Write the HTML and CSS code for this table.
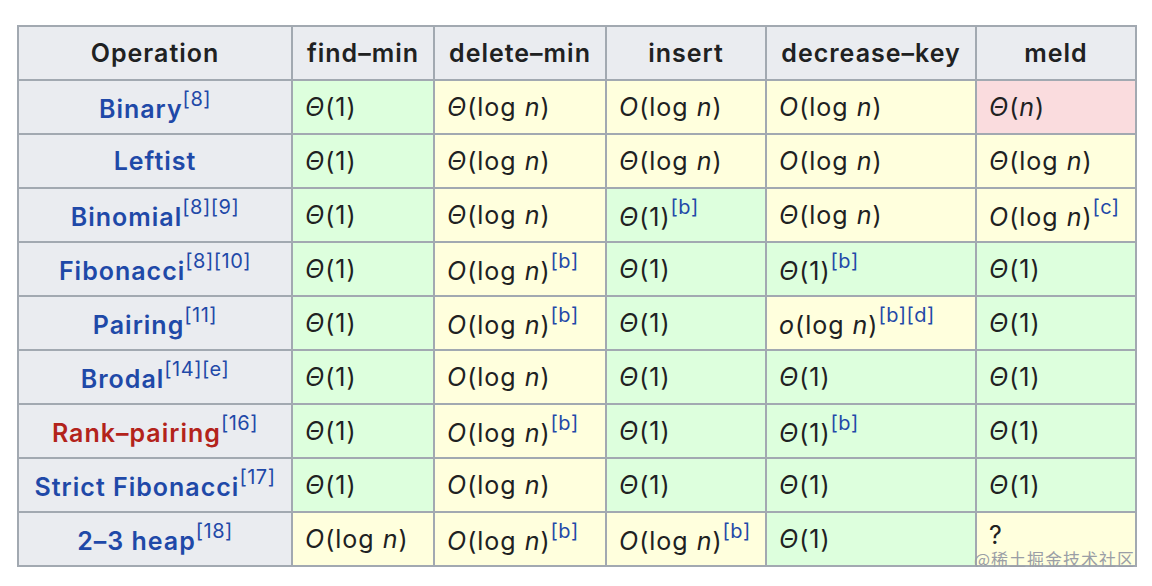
FILE: index.html
```html
<!DOCTYPE html>
<html>
<head>
<meta charset="utf-8">
<link rel="stylesheet" href="styles.css">
</head>
<body>
<div class="wrap">
<table class="wikitable">
  <colgroup>
    <col class="c1"><col class="c2"><col class="c3"><col class="c4"><col class="c5"><col class="c6">
  </colgroup>
  <thead>
    <tr>
      <th>Operation</th><th>find–min</th><th>delete–min</th><th>insert</th><th>decrease–key</th><th>meld</th>
    </tr>
  </thead>
  <tbody>
    <tr>
      <th><a class="lk">Binary</a><sup>[8]</sup></th>
      <td class="g"><i>Θ</i>(1)</td>
      <td class="y"><i>Θ</i>(log&nbsp;<i>n</i>)</td>
      <td class="y"><i>O</i>(log&nbsp;<i>n</i>)</td>
      <td class="y"><i>O</i>(log&nbsp;<i>n</i>)</td>
      <td class="r"><i>Θ</i>(<i>n</i>)</td>
    </tr>
    <tr>
      <th><a class="lk">Leftist</a></th>
      <td class="g"><i>Θ</i>(1)</td>
      <td class="y"><i>Θ</i>(log&nbsp;<i>n</i>)</td>
      <td class="y"><i>Θ</i>(log&nbsp;<i>n</i>)</td>
      <td class="y"><i>O</i>(log&nbsp;<i>n</i>)</td>
      <td class="y"><i>Θ</i>(log&nbsp;<i>n</i>)</td>
    </tr>
    <tr>
      <th><a class="lk">Binomial</a><sup>[8]</sup><sup>[9]</sup></th>
      <td class="g"><i>Θ</i>(1)</td>
      <td class="y"><i>Θ</i>(log&nbsp;<i>n</i>)</td>
      <td class="g"><i>Θ</i>(1)<sup>[b]</sup></td>
      <td class="y"><i>Θ</i>(log&nbsp;<i>n</i>)</td>
      <td class="y"><i>O</i>(log&nbsp;<i>n</i>)<sup>[c]</sup></td>
    </tr>
    <tr>
      <th><a class="lk">Fibonacci</a><sup>[8]</sup><sup>[10]</sup></th>
      <td class="g"><i>Θ</i>(1)</td>
      <td class="y"><i>O</i>(log&nbsp;<i>n</i>)<sup>[b]</sup></td>
      <td class="g"><i>Θ</i>(1)</td>
      <td class="g"><i>Θ</i>(1)<sup>[b]</sup></td>
      <td class="g"><i>Θ</i>(1)</td>
    </tr>
    <tr>
      <th><a class="lk">Pairing</a><sup>[11]</sup></th>
      <td class="g"><i>Θ</i>(1)</td>
      <td class="y"><i>O</i>(log&nbsp;<i>n</i>)<sup>[b]</sup></td>
      <td class="g"><i>Θ</i>(1)</td>
      <td class="y"><i>o</i>(log&nbsp;<i>n</i>)<sup>[b]</sup><sup>[d]</sup></td>
      <td class="g"><i>Θ</i>(1)</td>
    </tr>
    <tr>
      <th><a class="lk">Brodal</a><sup>[14]</sup><sup>[e]</sup></th>
      <td class="g"><i>Θ</i>(1)</td>
      <td class="y"><i>O</i>(log&nbsp;<i>n</i>)</td>
      <td class="g"><i>Θ</i>(1)</td>
      <td class="g"><i>Θ</i>(1)</td>
      <td class="g"><i>Θ</i>(1)</td>
    </tr>
    <tr>
      <th><a class="lk new">Rank–pairing</a><sup>[16]</sup></th>
      <td class="g"><i>Θ</i>(1)</td>
      <td class="y"><i>O</i>(log&nbsp;<i>n</i>)<sup>[b]</sup></td>
      <td class="g"><i>Θ</i>(1)</td>
      <td class="g"><i>Θ</i>(1)<sup>[b]</sup></td>
      <td class="g"><i>Θ</i>(1)</td>
    </tr>
    <tr>
      <th><a class="lk">Strict Fibonacci</a><sup>[17]</sup></th>
      <td class="g"><i>Θ</i>(1)</td>
      <td class="y"><i>O</i>(log&nbsp;<i>n</i>)</td>
      <td class="g"><i>Θ</i>(1)</td>
      <td class="g"><i>Θ</i>(1)</td>
      <td class="g"><i>Θ</i>(1)</td>
    </tr>
    <tr>
      <th><a class="lk">2–3 heap</a><sup>[18]</sup></th>
      <td class="y"><i>O</i>(log&nbsp;<i>n</i>)</td>
      <td class="y"><i>O</i>(log&nbsp;<i>n</i>)<sup>[b]</sup></td>
      <td class="y"><i>O</i>(log&nbsp;<i>n</i>)<sup>[b]</sup></td>
      <td class="g"><i>Θ</i>(1)</td>
      <td class="y q"><span class="qm">?</span></td>
    </tr>
  </tbody>
</table>
<div class="watermark">@稀土掘金技术社区</div>
</div>
</body>
</html>
```

FILE: styles.css
```css
html, body {
  margin: 0;
  padding: 0;
  background: #ffffff;
}
body {
  font-family: Inter, "Liberation Sans", Arial, "Noto Sans CJK SC", sans-serif;
  color: #202122;
}
.wrap {
  position: relative;
  padding: 25px 0 0 17px;
  width: 1120px;
}
.wikitable {
  border-collapse: collapse;
  table-layout: fixed;
  width: 1120px;
  font-size: 25px;
  letter-spacing: 1px;
}
.c1 { width: 274px; }
.c2 { width: 142px; }
.c3 { width: 172px; }
.c4 { width: 160px; }
.c5 { width: 210px; }
.c6 { width: 160px; }
.wikitable th,
.wikitable td {
  border: 2px solid #a2a9b1;
  height: 52px;
  padding: 0 12px;
  white-space: nowrap;
  line-height: 1.2;
}
.wikitable th {
  background: #eaecf0;
  font-weight: 600;
  text-align: center;
}
.wikitable td {
  text-align: left;
}
.g { background: #ddffdd; }
.y { background: #ffffdd; }
.r { background: #fadcde; }
.lk {
  color: #1f49a8;
}
.lk.new {
  color: #b3231b;
}
sup {
  font-size: 0.8em;
  font-weight: normal;
  color: #1f49a8;
  line-height: 1;
  letter-spacing: 0.5px;
  vertical-align: 0.62em;
}
.qm {
  display: inline-block;
  line-height: 22px;
  transform: translateY(-4px);
}
.watermark {
  position: absolute;
  right: 2px;
  bottom: 0;
  line-height: 17px;
  font-size: 17px;
  color: #9a9ea6;
  font-family: "Noto Sans CJK SC", sans-serif;
  letter-spacing: 1px;
}
```
